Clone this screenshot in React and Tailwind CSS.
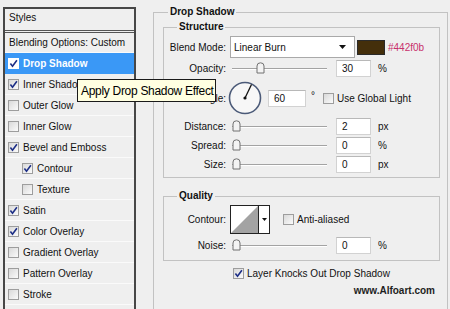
import React from 'react';

const styleItems = [
  { label: 'Drop Shadow', checked: true, selected: true },
  { label: 'Inner Shadow', checked: true },
  { label: 'Outer Glow' },
  { label: 'Inner Glow' },
  { label: 'Bevel and Emboss', checked: true },
  { label: 'Contour', checked: true, indent: true },
  { label: 'Texture', indent: true },
  { label: 'Satin', checked: true },
  { label: 'Color Overlay', checked: true },
  { label: 'Gradient Overlay' },
  { label: 'Pattern Overlay' },
  { label: 'Stroke' },
];

const Check = ({ checked, white }) => (
  <span
    className={
      white
        ? 'w-[11px] h-[11px] shrink-0 flex items-center justify-center bg-white border border-white'
        : 'w-[11px] h-[11px] shrink-0 flex items-center justify-center border border-[#9d9d9d] bg-gradient-to-br from-[#d9d9d9] to-[#fbfbfb]'
    }
  >
    {checked && (
      <svg width="9" height="9" viewBox="0 0 9 9">
        <path d="M1.4 4.6 L3.5 7.2 L7.9 1.2" fill="none" stroke="#1c2e86" strokeWidth="1.6" />
      </svg>
    )}
  </span>
);

const Slider = ({ pos }) => (
  <div className="relative ml-[4px] w-[97px] h-[18px]">
    <div className="absolute left-[2px] right-0 top-[9px] border-t border-b border-t-[#a3a3a3] border-b-white" />
    <svg className="absolute top-[3px]" style={{ left: pos }} width="9" height="12" viewBox="0 0 9 12">
      <path d="M1 4 Q1 0.8 4.5 0.8 Q8 0.8 8 4 V11 H1 Z" fill="#f3f3f3" stroke="#707070" strokeWidth="1" />
    </svg>
  </div>
);

const NumInput = ({ value, w = 'w-[35px]', ml = 'ml-[9px]' }) => (
  <div className={`${ml} ${w} h-[17px] bg-white border border-[#d2d2d2] border-t-[#b8b8b8] flex items-center pl-[5px]`}>
    {value}
  </div>
);

const Label = ({ children }) => <div className="w-[62px] shrink-0 text-right">{children}</div>;

const GroupTitle = ({ children, left }) => (
  <div className={`absolute -top-[7px] ${left} px-[2px] bg-[#efefef] font-bold leading-[12px]`}>{children}</div>
);

const SliderRow = ({ label, pos, value, unit, className = '' }) => (
  <div className={`flex items-center h-[18px] ${className}`}>
    <Label>{label}</Label>
    <Slider pos={pos} />
    <NumInput value={value} />
    <span className="ml-[7px]">{unit}</span>
  </div>
);

function StylesList() {
  return (
    <div className="ml-[3px] mt-[7px] w-[133px] h-[320px] shrink-0 border-2 border-[#474747] bg-[#efefef] text-[10px]">
      <div className="h-[24px] flex items-center pl-[4px] pb-[4px] border-b-[3px] border-double border-[#555]">Styles</div>
      <div className="h-[20px] flex items-center pl-[4px] border-b border-[#fafafa]">Blending Options: Custom</div>
      {styleItems.map((it) => (
        <div
          key={it.label}
          className={`h-[21px] flex items-center gap-[4px] border-b ${
            it.selected ? 'bg-[#3a98f6] border-[#3a98f6] text-white font-bold' : 'border-[#fafafa]'
          } ${it.indent ? 'pl-[17px]' : 'pl-[3px]'}`}
        >
          <Check checked={it.checked} white={it.selected} />
          <span>{it.label}</span>
        </div>
      ))}
    </div>
  );
}

function DropShadowPanel() {
  return (
    <div className="ml-[17px] mt-[12px] w-[295px] h-[320px] shrink-0 relative border-t border-l border-r border-[#c2c2c2] pt-[14px] pl-[9px]">
      <GroupTitle left="left-[14px]">Drop Shadow</GroupTitle>

      {/* Structure */}
      <div className="w-[277px] relative border border-[#c2c2c2] pt-[8px] pb-[4px]">
        <GroupTitle left="left-[13px]">Structure</GroupTitle>

        <div className="flex items-center h-[22px]">
          <Label>Blend Mode:</Label>
          <div className="ml-[4px] w-[125px] h-[22px] bg-white border border-[#a9a9a9] flex items-center justify-between pl-[3px] pr-[8px]">
            <span>Linear Burn</span>
            <svg width="7" height="4" viewBox="0 0 7 4">
              <path d="M0 0 H7 L3.5 4 Z" fill="#111" />
            </svg>
          </div>
          <div className="ml-[2px] w-[28px] h-[15px] bg-[#442f0b] border border-[#2a2a2a]" />
          <span className="ml-[3px] text-[#c8306c]">#442f0b</span>
        </div>

        <SliderRow label="Opacity:" pos={26} value="30" unit="%" className="mt-[1px]" />

        <div className="flex items-center h-[32px] mt-[5px]">
          <Label>Angle:</Label>
          <svg className="ml-[2px] shrink-0" width="34" height="34" viewBox="0 0 34 34">
            <circle cx="17" cy="17" r="15.5" fill="#f7f7f7" stroke="#4b5a78" strokeWidth="1.6" />
            <line x1="17" y1="17" x2="23.5" y2="3.5" stroke="#111" strokeWidth="1.3" />
            <circle cx="17" cy="17" r="1.6" fill="#111" />
          </svg>
          <NumInput value="60" w="w-[38px]" ml="ml-[6px]" />
          <span className="ml-[5px] self-start mt-[6px]">°</span>
          <span className="ml-[8px]">
            <Check />
          </span>
          <span className="ml-[3px]">Use Global Light</span>
        </div>

        <SliderRow label="Distance:" pos={2} value="2" unit="px" className="mt-[3px]" />
        <SliderRow label="Spread:" pos={2} value="0" unit="%" className="mt-[1px]" />
        <SliderRow label="Size:" pos={2} value="0" unit="px" className="mt-[1px]" />
      </div>

      {/* Quality */}
      <div className="w-[277px] relative border border-[#c2c2c2] mt-[18px] pt-[8px] pb-[6px]">
        <GroupTitle left="left-[13px]">Quality</GroupTitle>

        <div className="flex items-center h-[29px]">
          <Label>Contour:</Label>
          <div className="ml-[4px] w-[40px] h-[29px] bg-white border border-[#222] flex">
            <svg width="27" height="27" viewBox="0 0 27 27">
              <polygon points="0,27 27,0 27,27" fill="#a3a3a3" />
            </svg>
            <div className="flex-1 border-l border-[#222] flex items-center justify-center">
              <svg width="5" height="3" viewBox="0 0 5 3">
                <path d="M0 0 H5 L2.5 3 Z" fill="#111" />
              </svg>
            </div>
          </div>
          <span className="ml-[13px]">
            <Check />
          </span>
          <span className="ml-[3px]">Anti-aliased</span>
        </div>

        <SliderRow label="Noise:" pos={2} value="0" unit="%" className="mt-[2px]" />
      </div>

      <div className="flex items-center h-[13px] mt-[6px] ml-[70px]">
        <Check checked />
        <span className="ml-[3px]">Layer Knocks Out Drop Shadow</span>
      </div>

      <div className="w-[277px] text-right pr-[5px] mt-[3px] font-bold text-[10px] text-[#1e1e1e]">www.Alfoart.com</div>
    </div>
  );
}

export default function App() {
  return (
    <div className="w-[450px] h-[309px] bg-[#efefef] relative overflow-hidden flex items-start text-[10px] text-[#111] font-['Liberation_Sans',Arial,sans-serif]">
      <StylesList />
      <DropShadowPanel />
      <div className="absolute left-[77px] top-[79px] w-[139px] h-[23px] bg-[#ffffe1] border border-[#1a1a1a] flex items-center pl-[3px] text-[12px] tracking-[-0.3px] text-black">
        Apply Drop Shadow Effect
      </div>
    </div>
  );
}
